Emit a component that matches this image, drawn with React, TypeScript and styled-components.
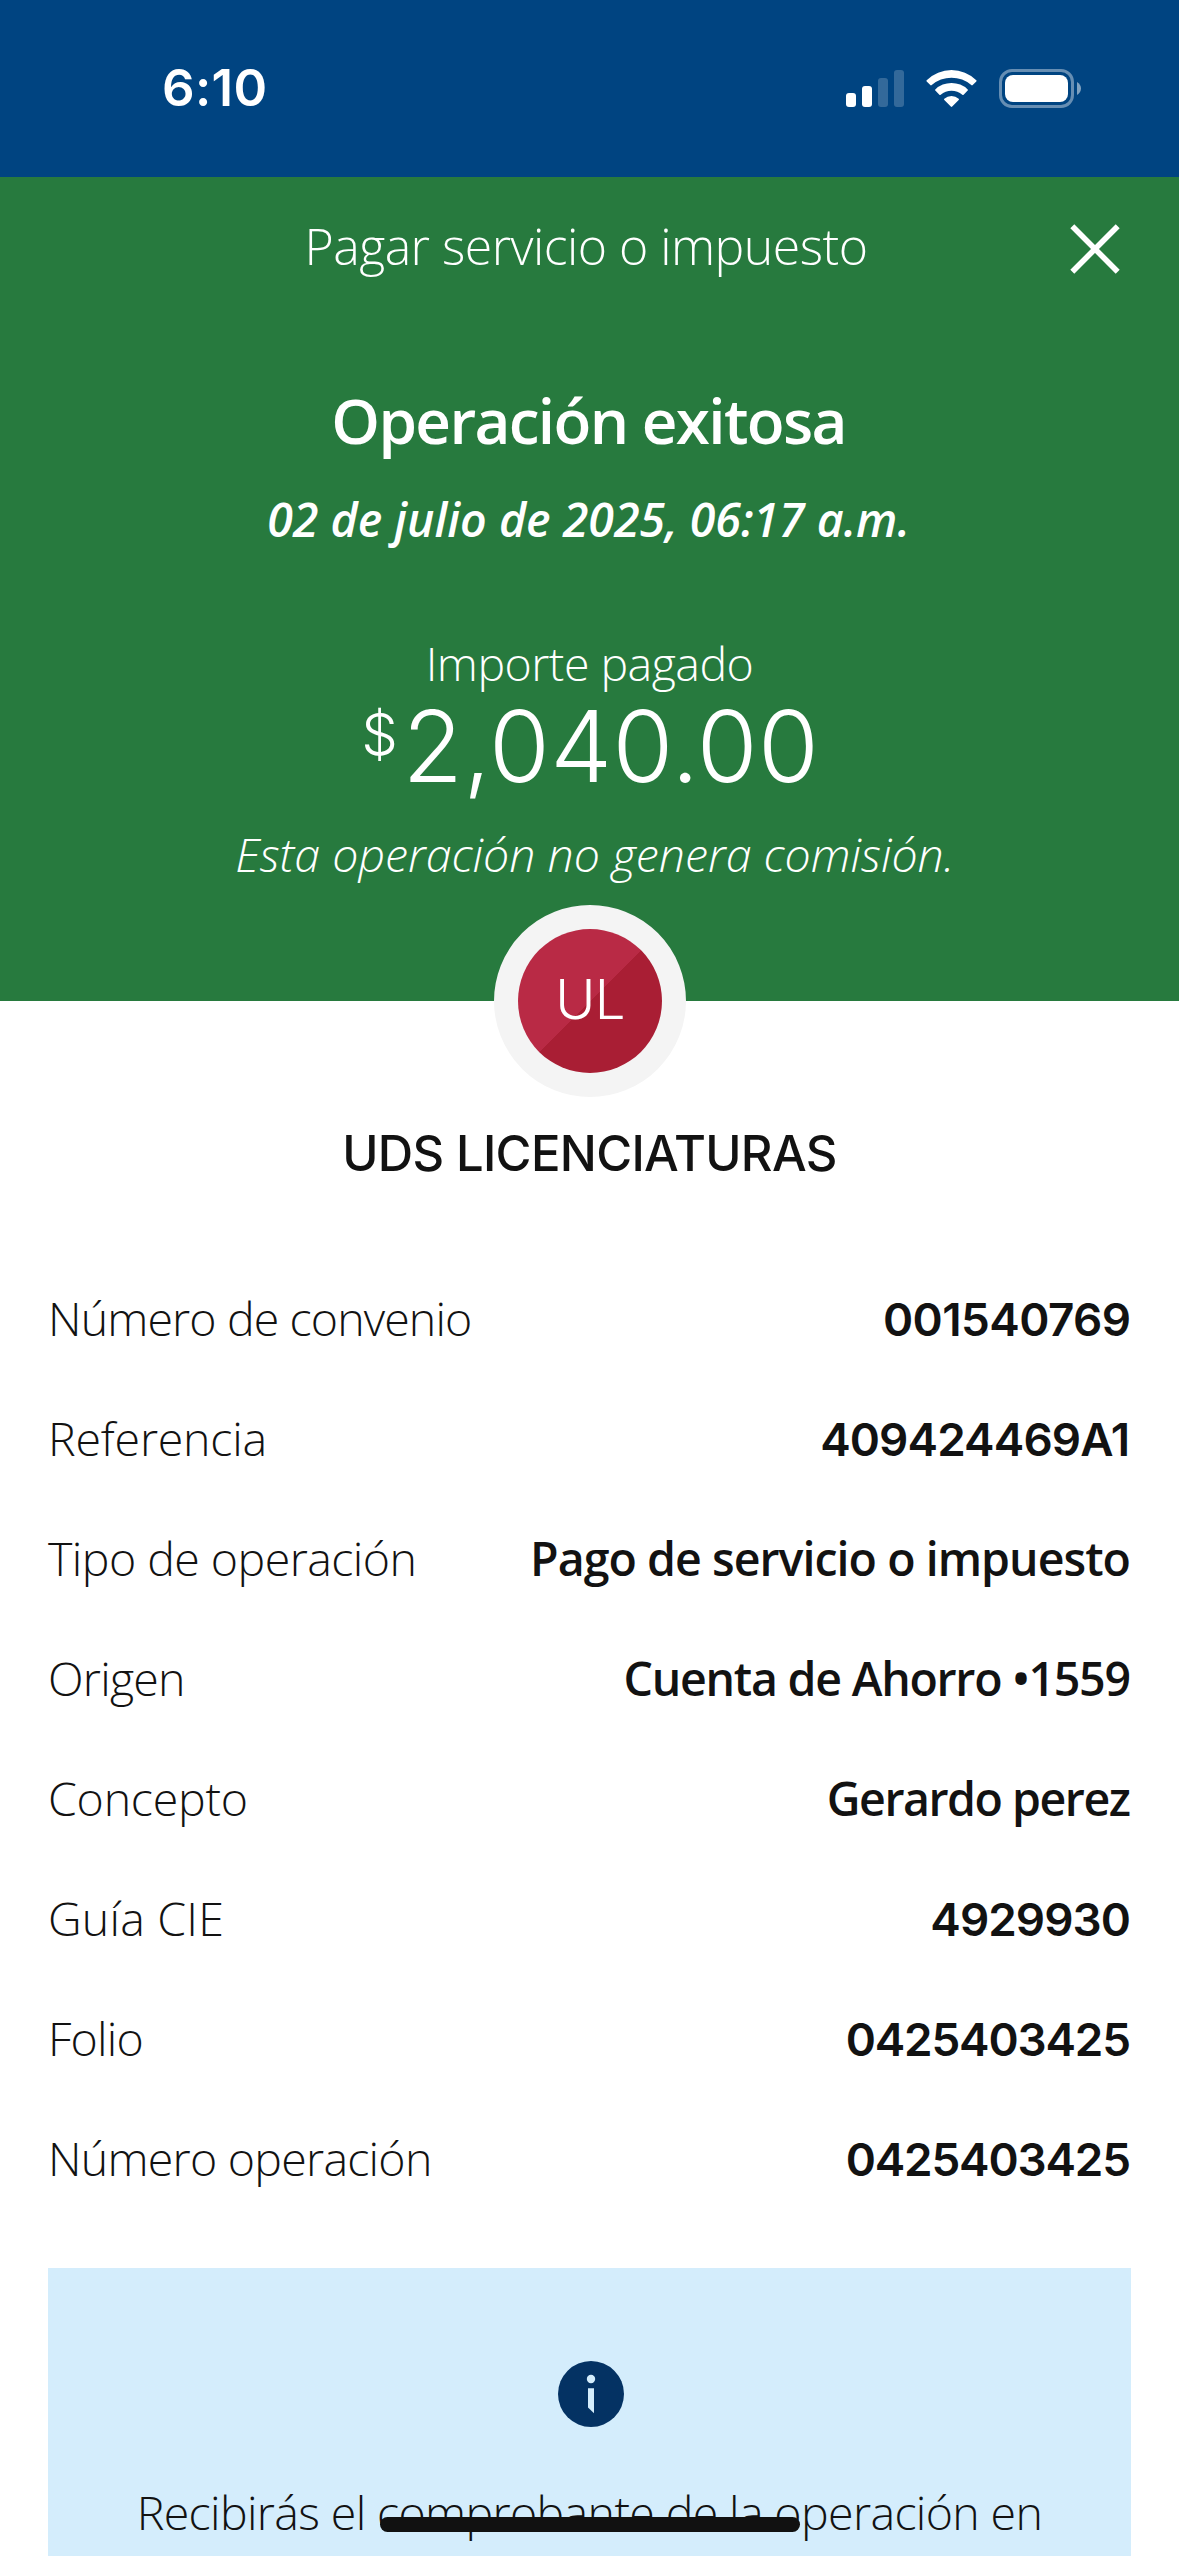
import React from 'react';
import styled, { createGlobalStyle, css } from 'styled-components';

const Global = createGlobalStyle`
  *, *::before, *::after { box-sizing: border-box; }
  html, body { margin: 0; padding: 0; background: #fff; }
  body {
    height: 2556px;
    overflow: hidden;
    font-family: "Open Sans", "Noto Sans", sans-serif;
    color: #121212;
  }
`;

const Screen = styled.main`
  position: relative;
  display: flex;
  flex-direction: column;
  width: 1179px;
  height: 2556px;
  overflow: hidden;
  background: #fff;
`;

const StatusBar = styled.div`
  display: flex;
  align-items: center;
  justify-content: space-between;
  flex: none;
  height: 177px;
  padding: 0 98px 1px 162px;
  background: #004481;
  color: #fff;
`;

const Clock = styled.span`
  font: 600 51px/64px Inter, Roboto, sans-serif;
  letter-spacing: 0.35px;
`;

const StatusIcons = styled.div`
  display: flex;
  align-items: center;
  gap: 22px;

  svg { display: block; }
`;

const Header = styled.header`
  display: flex;
  flex-direction: column;
  align-items: center;
  flex: none;
  height: 824px;
  background: #277a3e;
  color: #fff;
`;

const TitleBar = styled.div`
  display: grid;
  grid-template-columns: 109px 1fr 109px;
  align-items: center;
  width: 100%;
  height: 135px;
`;

const Title = styled.h1`
  grid-column: 2;
  margin: 0;
  padding: 2px 7px 0 0;
  text-align: center;
  font-size: 50px;
  font-weight: 300;
  line-height: 68px;
  letter-spacing: -0.54px;
`;

const CloseButton = styled.button`
  justify-self: start;
  display: flex;
  margin: 9px 0 0;
  padding: 0;
  border: 0;
  background: none;
  color: inherit;
`;

const Outcome = styled.h2`
  margin: 66px 0 25px;
  padding-right: 2px;
  font-size: 62px;
  font-weight: 600;
  line-height: 84px;
  letter-spacing: -1.68px;
`;

const Timestamp = styled.p`
  margin: 0 0 82px;
  padding-right: 2px;
  font-size: 46.5px;
  font-style: italic;
  font-weight: 600;
  line-height: 64px;
`;

const AmountLabel = styled.p`
  margin: 0;
  font-size: 46.5px;
  font-weight: 300;
  line-height: 60px;
  letter-spacing: -0.53px;
`;

const Amount = styled.div`
  display: flex;
  align-items: flex-start;
  gap: 4.7px;
  margin-top: 1px;
  padding-left: 1.4px;
  font-family: Inter, "Open Sans", sans-serif;
  font-weight: 300;
`;

const Currency = styled.span`
  font-size: 58px;
  line-height: 80px;
`;

const Figure = styled.span`
  font-size: 98.5px;
  line-height: 106px;
  letter-spacing: 0.35px;
`;

const Fee = styled.p`
  margin: 22px 0 0;
  padding-left: 10.6px;
  font-size: 46.5px;
  font-style: italic;
  font-weight: 300;
  line-height: 64px;
`;

const Payee = styled.section`
  display: flex;
  flex-direction: column;
  align-items: center;
  flex: none;
  height: 256px;
`;

const Avatar = styled.div`
  position: relative;
  width: 192px;
  height: 192px;
  margin: -96px 0 23px 1px;
  border: 24px solid #f4f4f4;
  border-radius: 50%;
  background: #f4f4f4;
`;

const Initials = styled.span`
  display: flex;
  align-items: center;
  justify-content: center;
  width: 144px;
  height: 144px;
  padding-bottom: 4px;
  border-radius: 50%;
  background: linear-gradient(135deg, #b92a45 50%, #a91e34 50%);
  color: #fff;
  font: 300 54.5px Inter, "Open Sans", sans-serif;
  letter-spacing: -0.6px;
`;

const PayeeName = styled.h3`
  margin: 0;
  font: 500 49px/68px Inter, "Open Sans", sans-serif;
  letter-spacing: -0.67px;
`;

const Details = styled.dl`
  flex: none;
  margin: 0;
  padding: 0 48px;
`;

const DetailRow = styled.div`
  display: flex;
  align-items: center;
  justify-content: space-between;
  height: 120px;
  padding-top: 2px;
  font-size: 46.5px;
  white-space: nowrap;
`;

const Label = styled.dt<{ $track: number }>`
  font-weight: 300;
  letter-spacing: ${p => p.$track}px;
`;

const Value = styled.dd<{ $track: number; $end: number; $code: boolean }>`
  margin: 0 ${p => -p.$track - p.$end}px 0 0;
  font-weight: 600;
  letter-spacing: ${p => p.$track}px;

  ${p => p.$code && css`
    padding-top: 2px;
    font-family: Inter, "Open Sans", sans-serif;
    font-size: 45.8px;
  `}
`;

const Notice = styled.aside`
  display: flex;
  flex-direction: column;
  align-items: center;
  flex: none;
  height: 420px;
  margin: 51px 48px 0;
  padding-top: 93px;
  background: #d4edfc;
`;

const NoticeIcon = styled.svg`
  display: block;
  margin-left: 3px;
`;

const NoticeText = styled.p`
  margin: 53px 0 0;
  font-size: 46.5px;
  font-weight: 300;
  line-height: 64px;
  letter-spacing: -0.64px;
  white-space: nowrap;
`;

const HomeIndicator = styled.div`
  position: absolute;
  left: 380px;
  bottom: 24px;
  width: 420px;
  height: 15px;
  border-radius: 8px;
  background: #111;
`;

interface Detail {
  label: string;
  value: string;
  labelTrack: number;
  valueTrack: number;
  code?: boolean;
  end?: number;
}

const details: Detail[] = [
  { label: 'Número de convenio', value: '001540769', labelTrack: -0.88, valueTrack: -0.57, code: true },
  { label: 'Referencia', value: '409424469A1', labelTrack: -0.2, valueTrack: -0.87, code: true, end: -1 },
  { label: 'Tipo de operación', value: 'Pago de servicio o impuesto', labelTrack: -0.55, valueTrack: -0.96 },
  { label: 'Origen', value: 'Cuenta de Ahorro •1559', labelTrack: -0.75, valueTrack: -1.25 },
  { label: 'Concepto', value: 'Gerardo perez', labelTrack: -0.25, valueTrack: -1.48 },
  { label: 'Guía CIE', value: '4929930', labelTrack: 0.2, valueTrack: -0.93, code: true },
  { label: 'Folio', value: '0425403425', labelTrack: -0.8, valueTrack: -1.16, code: true },
  { label: 'Número operación', value: '0425403425', labelTrack: -0.75, valueTrack: -1.16, code: true },
];

const SignalIcon = () => (
  <svg width="58" height="37" viewBox="0 0 58 37" fill="#fff">
    <rect x="0" y="23" width="10" height="14" rx="3" />
    <rect x="16" y="16" width="10" height="21" rx="3" />
    <rect x="32" y="8" width="10" height="29" rx="3" opacity="0.2" />
    <rect x="48" y="0" width="10" height="37" rx="3" opacity="0.2" />
  </svg>
);

const WifiIcon = () => (
  <svg width="51" height="37" viewBox="0 0 51 37" fill="#fff">
    <path d="M.7 10.2A35.5 35.5 0 0 1 50.3 10.2Q50.9 10.8 50.3 11.4L46.7 15.1Q46 15.7 45.3 15.1A30 30 0 0 0 5.7 15.1Q5 15.7 4.3 15.1L.7 11.4Q.1 10.8.7 10.2Z" />
    <path d="M9.3 19.4A23.4 23.4 0 0 1 41.7 19.4Q42.3 20 41.7 20.6L37.6 24.7Q37 25.2 36.3 24.7A16.5 16.5 0 0 0 14.7 24.7Q14 25.2 13.4 24.7L9.3 20.6Q8.7 20 9.3 19.4Z" />
    <path d="M18.3 28.7A11 11 0 0 1 32.7 28.7Q33.3 29.3 32.7 29.9L26.2 36.6Q25.5 37.2 24.8 36.6L18.3 29.9Q17.7 29.3 18.3 28.7Z" />
  </svg>
);

const BatteryIcon = () => (
  <svg width="82" height="39" viewBox="0 0 82 39" fill="#fff">
    <rect x="1.5" y="1.5" width="72" height="36" rx="11.5" fill="none" stroke="#fff" strokeWidth="3" opacity="0.4" />
    <rect x="6" y="6" width="63" height="27" rx="8" />
    <path d="M78 13C80.4 14.2 82 16.7 82 19.5S80.4 24.8 78 26Z" opacity="0.5" />
  </svg>
);

const CloseIcon = () => (
  <svg width="50" height="50" viewBox="0 0 50 50" stroke="#fff" strokeWidth="5.6">
    <path d="M2.3 2.3 47.7 47.7M47.7 2.3 2.3 47.7" />
  </svg>
);

const InfoIcon = () => (
  <NoticeIcon width="66" height="66" viewBox="0 0 66 66">
    <circle cx="33" cy="33" r="33" fill="#043263" />
    <circle cx="33" cy="18" r="4.2" fill="#d4edfc" />
    <path d="M30 27.3H36V52.3L30 46.5Z" fill="#d4edfc" />
  </NoticeIcon>
);

export default function App() {
  return (
    <Screen>
      <Global />
      <StatusBar>
        <Clock>6:10</Clock>
        <StatusIcons>
          <SignalIcon />
          <WifiIcon />
          <BatteryIcon />
        </StatusIcons>
      </StatusBar>

      <Header>
        <TitleBar>
          <Title>Pagar servicio o impuesto</Title>
          <CloseButton aria-label="Cerrar">
            <CloseIcon />
          </CloseButton>
        </TitleBar>
        <Outcome>Operación exitosa</Outcome>
        <Timestamp>02 de julio de 2025, 06:17 a.m.</Timestamp>
        <AmountLabel>Importe pagado</AmountLabel>
        <Amount>
          <Currency>$</Currency>
          <Figure>2,040.00</Figure>
        </Amount>
        <Fee>Esta operación no genera comisión.</Fee>
      </Header>

      <Payee>
        <Avatar>
          <Initials>UL</Initials>
        </Avatar>
        <PayeeName>UDS LICENCIATURAS</PayeeName>
      </Payee>

      <Details>
        {details.map(d => (
          <DetailRow key={d.label}>
            <Label $track={d.labelTrack}>{d.label}</Label>
            <Value $track={d.valueTrack} $end={d.end ?? 0} $code={d.code ?? false}>
              {d.value}
            </Value>
          </DetailRow>
        ))}
      </Details>

      <Notice>
        <InfoIcon />
        <NoticeText>Recibirás el comprobante de la operación en</NoticeText>
      </Notice>

      <HomeIndicator />
    </Screen>
  );
}
